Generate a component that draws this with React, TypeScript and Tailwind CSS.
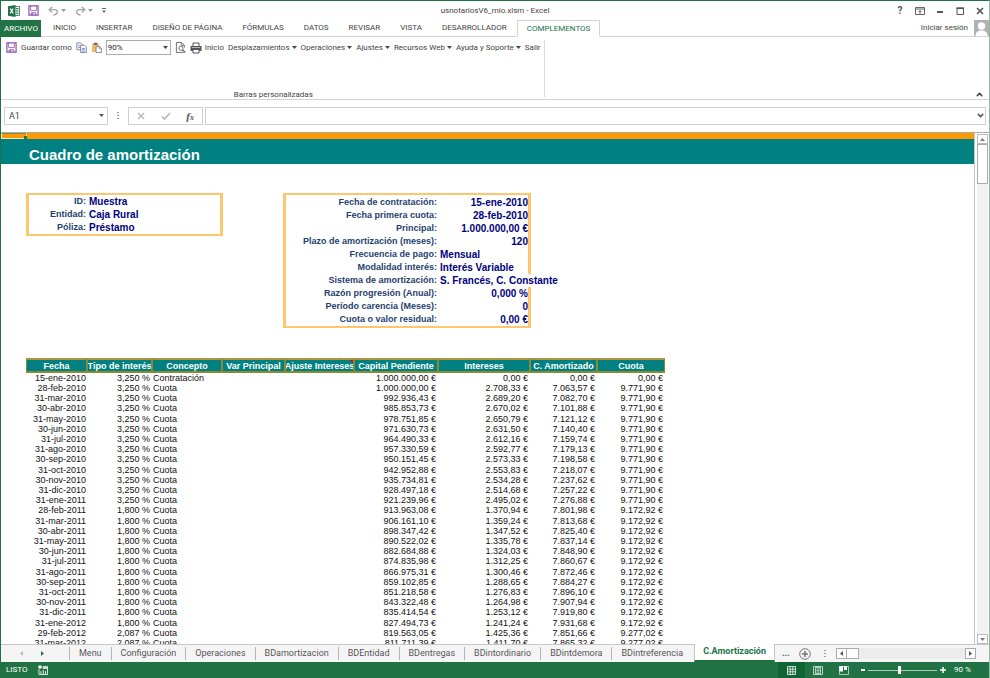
import type { ReactNode } from "react";
import { ChevronDown, ChevronUp } from "lucide-react";

const ribbonTabs = [
  "INICIO",
  "INSERTAR",
  "DISEÑO DE PÁGINA",
  "FÓRMULAS",
  "DATOS",
  "REVISAR",
  "VISTA",
  "DESARROLLADOR",
  "COMPLEMENTOS",
];

const addinMenus = [
  "Desplazamientos",
  "Operaciones",
  "Ajustes",
  "Recursos Web",
  "Ayuda y Soporte",
];

const sheetTabs = [
  "Menu",
  "Configuración",
  "Operaciones",
  "BDamortizacion",
  "BDEntidad",
  "BDentregas",
  "BDintordinario",
  "BDintdemora",
  "BDintreferencia",
];

const loanInfo = [
  { label: "ID:", value: "Muestra" },
  { label: "Entidad:", value: "Caja Rural" },
  { label: "Póliza:", value: "Préstamo" },
];

const loanTerms = [
  { label: "Fecha de contratación:", value: "15-ene-2010", right: true },
  { label: "Fecha primera cuota:", value: "28-feb-2010", right: true },
  { label: "Principal:", value: "1.000.000,00 €", right: true },
  { label: "Plazo de amortización (meses):", value: "120", right: true },
  { label: "Frecuencia de pago:", value: "Mensual", right: false },
  { label: "Modalidad interés:", value: "Interés Variable", right: false },
  { label: "Sistema de amortización:", value: "S. Francés, C. Constante", right: false },
  { label: "Razón progresión (Anual):", value: "0,000 %", right: true },
  { label: "Período carencia (Meses):", value: "0", right: true },
  { label: "Cuota o valor residual:", value: "0,00 €", right: true },
];

const columns = [
  { title: "Fecha", width: "w-[61px]" },
  { title: "Tipo de interés", width: "w-[65px]" },
  { title: "Concepto", width: "w-[70px]" },
  { title: "Var Principal", width: "w-[63px]" },
  { title: "Ajuste Intereses", width: "w-[69px]", note: true },
  { title: "Capital Pendiente", width: "w-[84px]" },
  { title: "Intereses", width: "w-[92px]" },
  { title: "C. Amortizado", width: "w-[67px]" },
  { title: "Cuota", width: "w-[68px]" },
];

// fecha, tipo, concepto, capital pendiente, intereses, amortizado, cuota
const payments = [
  ["15-ene-2010", "3,250 %", "Contratación", "1.000.000,00", "0,00", "0,00", "0,00"],
  ["28-feb-2010", "3,250 %", "Cuota", "1.000.000,00", "2.708,33", "7.063,57", "9.771,90"],
  ["31-mar-2010", "3,250 %", "Cuota", "992.936,43", "2.689,20", "7.082,70", "9.771,90"],
  ["30-abr-2010", "3,250 %", "Cuota", "985.853,73", "2.670,02", "7.101,88", "9.771,90"],
  ["31-may-2010", "3,250 %", "Cuota", "978.751,85", "2.650,79", "7.121,12", "9.771,90"],
  ["30-jun-2010", "3,250 %", "Cuota", "971.630,73", "2.631,50", "7.140,40", "9.771,90"],
  ["31-jul-2010", "3,250 %", "Cuota", "964.490,33", "2.612,16", "7.159,74", "9.771,90"],
  ["31-ago-2010", "3,250 %", "Cuota", "957.330,59", "2.592,77", "7.179,13", "9.771,90"],
  ["30-sep-2010", "3,250 %", "Cuota", "950.151,45", "2.573,33", "7.198,58", "9.771,90"],
  ["31-oct-2010", "3,250 %", "Cuota", "942.952,88", "2.553,83", "7.218,07", "9.771,90"],
  ["30-nov-2010", "3,250 %", "Cuota", "935.734,81", "2.534,28", "7.237,62", "9.771,90"],
  ["31-dic-2010", "3,250 %", "Cuota", "928.497,18", "2.514,68", "7.257,22", "9.771,90"],
  ["31-ene-2011", "3,250 %", "Cuota", "921.239,96", "2.495,02", "7.276,88", "9.771,90"],
  ["28-feb-2011", "1,800 %", "Cuota", "913.963,08", "1.370,94", "7.801,98", "9.172,92"],
  ["31-mar-2011", "1,800 %", "Cuota", "906.161,10", "1.359,24", "7.813,68", "9.172,92"],
  ["30-abr-2011", "1,800 %", "Cuota", "898.347,42", "1.347,52", "7.825,40", "9.172,92"],
  ["31-may-2011", "1,800 %", "Cuota", "890.522,02", "1.335,78", "7.837,14", "9.172,92"],
  ["30-jun-2011", "1,800 %", "Cuota", "882.684,88", "1.324,03", "7.848,90", "9.172,92"],
  ["31-jul-2011", "1,800 %", "Cuota", "874.835,98", "1.312,25", "7.860,67", "9.172,92"],
  ["31-ago-2011", "1,800 %", "Cuota", "866.975,31", "1.300,46", "7.872,46", "9.172,92"],
  ["30-sep-2011", "1,800 %", "Cuota", "859.102,85", "1.288,65", "7.884,27", "9.172,92"],
  ["31-oct-2011", "1,800 %", "Cuota", "851.218,58", "1.276,83", "7.896,10", "9.172,92"],
  ["30-nov-2011", "1,800 %", "Cuota", "843.322,48", "1.264,98", "7.907,94", "9.172,92"],
  ["31-dic-2011", "1,800 %", "Cuota", "835.414,54", "1.253,12", "7.919,80", "9.172,92"],
  ["31-ene-2012", "1,800 %", "Cuota", "827.494,73", "1.241,24", "7.931,68", "9.172,92"],
  ["29-feb-2012", "2,087 %", "Cuota", "819.563,05", "1.425,36", "7.851,66", "9.277,02"],
  ["31-mar-2012", "2,087 %", "Cuota", "811.711,39", "1.411,70", "7.865,32", "9.277,02"],
];

function Caret({ className = "" }: { className?: string }) {
  return (
    <svg viewBox="0 0 5 3" className={`h-[3px] w-[5px] shrink-0 ${className}`} fill="currentColor">
      <path d="M0 0h5L2.500 3z" />
    </svg>
  );
}

function SaveIcon() {
  return (
    <svg viewBox="0 0 12 12" className="size-[11px]" fill="none" stroke="#8c4fae">
      <path d="M1 1h10v10H1z" strokeWidth="1.300" />
      <path d="M2.800 1v5h6.400V1" strokeWidth=".8" />
      <path d="M3.500 11V8.500h5V11" strokeWidth="1" />
      <path d="M5 9v2" strokeWidth="1.100" />
    </svg>
  );
}

function ExcelIcon() {
  return (
    <svg viewBox="0 0 12 12" className="size-3">
      <path d="M6.500 1.500h5v9h-5z" fill="#fff" stroke="#217346" strokeWidth=".8" />
      <path d="M8 3.500h2.500M8 5.200h2.500M8 6.900h2.500M8 8.600h2.500" stroke="#217346" strokeWidth=".9" />
      <path d="M0 1.200 7.500 0v12L0 10.800z" fill="#217346" />
      <path d="m2.200 3.700 3 4.600M5.200 3.700l-3 4.600" stroke="#fff" strokeWidth="1.200" />
    </svg>
  );
}

function UndoIcon({ flip = false }: { flip?: boolean }) {
  return (
    <svg
      viewBox="0 0 12 11"
      className={`h-[10px] w-[11px] ${flip ? "-scale-x-100" : ""}`}
      fill="none"
      stroke="#a6a6a6"
      strokeWidth="1.500"
    >
      <path d="M4.500 1 1.200 4l3.300 3M1.500 4H7c4.500 0 4.500 5-1 6.200" />
    </svg>
  );
}

function CopyIcon() {
  return (
    <svg viewBox="0 0 12 12" className="size-[11px]" fill="#fff" stroke="#6d7480" strokeWidth=".9">
      <path d="M1 1h4l2 2v5.500H1z" />
      <path d="M2.300 4h3M2.300 6h3" stroke="#5b8fc7" />
      <path d="M5 3.500h4l2.300 2.200v5.800H5z" />
      <path d="M6.300 7h3.600M6.300 8.500h3.600M6.300 10h3.600" stroke="#5b8fc7" />
    </svg>
  );
}

function PasteIcon() {
  return (
    <svg viewBox="0 0 12 12" className="size-[11px]">
      <path d="M1 2h8v9H1z" fill="#f1bd6b" />
      <path d="M3 .8h4v2.400H3z" fill="#666" />
      <path d="M5.500 5h3.800l2 2v4.500H5.500z" fill="#fff" stroke="#6d7480" strokeWidth=".9" />
      <path d="M9 5v2.300h2.300" fill="none" stroke="#6d7480" strokeWidth=".7" />
    </svg>
  );
}

function PreviewIcon() {
  return (
    <svg viewBox="0 0 12 12" className="size-[11px]" fill="none" stroke="#666">
      <path d="M9.500 11.400H1.500V.6h5.700l3 3V6" />
      <path d="M7 .6v3.200h3.300" strokeWidth=".8" />
      <circle cx="6.500" cy="6.800" r="2.300" fill="#fff" />
      <path d="m8.200 8.500 3 3" strokeWidth="1.400" />
    </svg>
  );
}

function PrinterIcon() {
  return (
    <svg viewBox="0 0 12 12" className="size-3">
      <path d="M3 4V1h6v3" fill="#fff" stroke="#555" />
      <path d="M.5 4h11v5H.5z" fill="#555" />
      <path d="M3 7.500h6V11H3z" fill="#fff" stroke="#555" />
      <path d="M1.800 5.500h8.400" stroke="#ddd" strokeWidth=".7" />
    </svg>
  );
}

function IconButton({ label, children }: { label: string; children: ReactNode }) {
  return (
    <button type="button" aria-label={label} className="flex shrink-0 items-center justify-center">
      {children}
    </button>
  );
}

function TitleBar() {
  return (
    <header className="grid h-[19px] grid-cols-[1fr_auto_1fr] items-center text-[#444]">
      <div className="flex items-center pl-[7px] text-[#999]">
        <ExcelIcon />
        <div className="ml-2 flex items-center gap-[9px]">
          <IconButton label="Guardar">
            <SaveIcon />
          </IconButton>
          <div className="flex items-center gap-[2px]">
            <IconButton label="Deshacer">
              <UndoIcon />
            </IconButton>
            <Caret className="h-[2px] w-[4px]" />
          </div>
          <div className="flex items-center gap-[2px]">
            <IconButton label="Rehacer">
              <UndoIcon flip />
            </IconButton>
            <Caret className="h-[2px] w-[4px]" />
          </div>
          <IconButton label="Personalizar barra">
            <svg viewBox="0 0 5 6" className="h-[5px] w-[4px]" fill="#666">
              <path d="M0 0h5v1H0zM0 3h5L2.500 6z" />
            </svg>
          </IconButton>
        </div>
      </div>
      <h1 className="text-[8px]">usnotariosV6_mio.xlsm - Excel</h1>
      <div className="flex items-center justify-end gap-[10px] pr-[4px] text-[#555]">
        <button type="button" className="w-[10px] text-[10px] font-bold leading-none">
          ?
        </button>
        <IconButton label="Opciones de la cinta">
          <svg viewBox="0 0 10 8" className="h-2 w-[10px]" fill="none" stroke="currentColor">
            <path d="M.5.5h9v7h-9zM.5 2h9" strokeWidth=".9" />
            <path d="M5 6.800V3.500M3.500 5 5 3.500 6.500 5" strokeWidth=".9" />
          </svg>
        </IconButton>
        <IconButton label="Minimizar">
          <svg viewBox="0 0 10 8" className="h-2 w-[10px]" fill="currentColor">
            <path d="M2 4h6v2H2z" />
          </svg>
        </IconButton>
        <IconButton label="Maximizar">
          <svg viewBox="0 0 10 8" className="h-2 w-[10px]" fill="none" stroke="currentColor">
            <path d="M2 1v6.500h6.500V1" />
            <path d="M1.500 1.200H9" strokeWidth="1.800" />
          </svg>
        </IconButton>
        <IconButton label="Cerrar">
          <svg viewBox="0 0 10 8" className="h-2 w-[10px]" stroke="currentColor" strokeWidth="1.600">
            <path d="m2 1 6 6M8 1 2 7" />
          </svg>
        </IconButton>
      </div>
    </header>
  );
}

function RibbonTabs() {
  return (
    <nav className="flex h-[17px] text-[8px] text-[#444]">
      <button type="button" className="w-10 bg-[#217346] text-white">
        ARCHIVO
      </button>
      <div className="w-[2px] border-b border-[#d4d4d4]" />
      {ribbonTabs.map((tab) => (
        <button
          key={tab}
          type="button"
          className={
            tab === "COMPLEMENTOS"
              ? "border border-[#d4d4d4] border-b-white px-[9px] text-[#217346]"
              : "border-b border-[#d4d4d4] px-[10px]"
          }
        >
          {tab}
        </button>
      ))}
      <div className="flex flex-1 items-center justify-end gap-[6px] border-b border-[#d4d4d4]">
        <a href="#" className="text-[#444]">
          Iniciar sesión
        </a>
        <svg viewBox="0 0 15 16" className="h-4 w-[15px]">
          <path d="M0 0h15v16H0z" fill="#b1b1b1" />
          <circle cx="7.500" cy="6" r="3.700" fill="#fff" />
          <path d="M1.500 16c0-4 2.500-5.500 6-5.500s6 1.500 6 5.500z" fill="#fff" />
        </svg>
      </div>
    </nav>
  );
}

function Ribbon() {
  return (
    <section className="flex h-[63px] border-b border-[#d4d4d4] text-[8px] text-[#444]">
      <div className="mb-[2px] mt-[3px] flex flex-col border-r border-[#dcdcdc] pl-[5px] pr-[3px]">
        <div className="flex h-[15px] items-center gap-[4px] whitespace-nowrap">
          <button type="button" className="flex items-center gap-[4px]">
            <SaveIcon />
            Guardar como
          </button>
          <IconButton label="Copiar">
            <CopyIcon />
          </IconButton>
          <IconButton label="Pegar">
            <PasteIcon />
          </IconButton>
          <div className="relative">
            <select
              aria-label="Zoom"
              className="block h-[15px] w-[65px] appearance-none border border-[#ababab] bg-white pl-px text-[8px] text-[#222]"
            >
              <option>90%</option>
            </select>
            <Caret className="pointer-events-none absolute right-[3px] top-[6px] h-[2px] w-[4px]" />
          </div>
          <IconButton label="Vista previa">
            <PreviewIcon />
          </IconButton>
          <button type="button" className="flex items-center gap-[3px]">
            <PrinterIcon />
            Inicio
          </button>
          {addinMenus.map((menu) => (
            <button key={menu} type="button" className="flex items-center gap-[2px]">
              {menu}
              <Caret className="h-[2px] w-[3px]" />
            </button>
          ))}
          <button type="button">Salir</button>
        </div>
        <p className="mt-auto text-center leading-[5px]">Barras personalizadas</p>
      </div>
      <button type="button" aria-label="Contraer la cinta" className="ml-auto mr-[5px] self-end">
        <ChevronUp className="size-[9px]" strokeWidth={4} />
      </button>
    </section>
  );
}

function FormulaBar() {
  return (
    <div className="flex h-8 items-center px-[3px] text-[#555]">
      <div className="relative">
        <input
          aria-label="Cuadro de nombres"
          defaultValue="A1"
          className="block h-[18px] w-[104px] border border-[#d0d0d0] pl-1 text-[9px] text-[#444] outline-none"
        />
        <Caret className="absolute right-1 top-[7px]" />
      </div>
      <svg viewBox="0 0 2 8" className="mx-[9px] h-2 w-[2px]" fill="#999">
        <path d="M0 0h2v1H0zM0 3h2v1H0zM0 6h2v1H0z" />
      </svg>
      <div className="flex h-[18px] w-[75px] items-center justify-between border border-[#d0d0d0] px-2">
        <IconButton label="Cancelar">
          <svg viewBox="0 0 8 8" className="size-2" stroke="#b5b5b5" strokeWidth="1.300">
            <path d="m1 1 6 6M7 1 1 7" />
          </svg>
        </IconButton>
        <IconButton label="Introducir">
          <svg viewBox="0 0 10 8" className="h-2 w-[10px]" fill="none" stroke="#b5b5b5" strokeWidth="1.600">
            <path d="m1 4.500 2.500 2.500L9 1" />
          </svg>
        </IconButton>
        <button
          type="button"
          className="font-['Liberation_Serif',serif] text-[11px] font-bold italic leading-none text-[#555]"
        >
          f<span className="text-[8px]">x</span>
        </button>
      </div>
      <div className="relative ml-[2px] flex-1">
        <input
          aria-label="Barra de fórmulas"
          className="block h-[18px] w-full border border-[#d0d0d0] px-1 text-[9px] outline-none"
        />
        <ChevronDown className="absolute right-px top-[4px] size-[9px]" strokeWidth={4} />
      </div>
    </div>
  );
}

function InfoBoxes() {
  return (
    <div className="flex items-start gap-[60px] text-[10px] font-bold leading-[13px] text-[#000080]">
      <dl className="w-[197px] border-x-[3px] border-y-2 border-[#ffc66d]">
        {loanInfo.map((item) => (
          <div key={item.label} className="flex gap-[3px]">
            <dt className="w-[57px] text-right text-[9px] text-[#1f3f70]">{item.label}</dt>
            <dd>{item.value}</dd>
          </div>
        ))}
      </dl>
      <dl className="w-[248px] border-x-[3px] border-y-2 border-[#ffc66d] pt-px">
        {loanTerms.map((item) => (
          <div key={item.label} className="flex gap-[3px] whitespace-nowrap">
            <dt className="w-[151px] shrink-0 text-right text-[9px] text-[#1f3f70]">{item.label}</dt>
            <dd className={item.right ? "flex-1 text-right" : "relative bg-white"}>{item.value}</dd>
          </div>
        ))}
      </dl>
    </div>
  );
}

function PaymentsTable() {
  return (
    <table className="w-[639px] table-fixed border-separate border-spacing-0 whitespace-nowrap text-[9px] leading-[10px] text-[#111]">
      <thead>
        <tr className="h-[15px]">
          {columns.map((column) => (
            <th
              key={column.title}
              scope="col"
              className={`relative overflow-hidden border-x border-y-2 border-[#8a8a35] border-t-[#b0933c] bg-[#008080] p-0 text-center font-bold text-white ${column.width}`}
            >
              <span className="flex justify-center">{column.title}</span>
              {column.note && (
                <svg viewBox="0 0 3 3" className="absolute right-0 top-0 size-[3px]" fill="#f00000">
                  <path d="M0 0h3v3z" />
                </svg>
              )}
            </th>
          ))}
        </tr>
      </thead>
      <tbody>
        {payments.map(([date, rate, concept, ...amounts]) => (
          <tr key={date} className="h-[10px] nth-[5n]:h-[11px]">
            <td className="p-0 pr-px text-right">{date}</td>
            <td className="p-0 pr-[2px] text-right">{rate}</td>
            <td className="p-0 pl-px">{concept}</td>
            <td className="p-0" />
            <td className="p-0" />
            {amounts.map((amount, i) => (
              <td key={i} className="p-0 pr-[2px] text-right">
                {amount} €
              </td>
            ))}
          </tr>
        ))}
      </tbody>
    </table>
  );
}

function Worksheet() {
  return (
    <main className="flex min-h-0 flex-1 border-t border-[#a9b0a9]">
      <div className="flex-1 overflow-hidden border-r border-[#c6c6c6] font-['Liberation_Sans',Arial,sans-serif]">
        <div className="h-[6px] bg-[#ff9900]">
          <div className="relative h-[6px] w-[26px] border border-[#f5e6bd] border-t-[#7d8a4a]">
            <span className="absolute -bottom-px -right-px size-[3px] bg-[#217346]" />
          </div>
        </div>
        <h2 className="h-[25px] bg-[#008080] pl-7 text-[15px] font-bold leading-[31px] text-white">
          Cuadro de amortización
        </h2>
        <div className="flex flex-col gap-[30px] pl-[25px] pt-[29px]">
          <InfoBoxes />
          <PaymentsTable />
        </div>
      </div>
      <div className="flex w-[14px] flex-col items-center bg-white pt-px text-[#777]">
        <button
          type="button"
          aria-label="Subir"
          className="flex h-[10px] w-[11px] items-center justify-center border border-[#bbb]"
        >
          <Caret className="rotate-180" />
        </button>
        <div className="w-[11px] flex-1 bg-[#f1f1f1]">
          <div className="h-10 border border-[#ababab] bg-white" />
        </div>
        <button
          type="button"
          aria-label="Bajar"
          className="flex h-[10px] w-[11px] items-center justify-center border border-[#bbb]"
        >
          <Caret />
        </button>
      </div>
    </main>
  );
}

function SheetTabs() {
  return (
    <nav className="flex h-[18px] items-center border-t border-[#c6c6c6] bg-[#f5f5f5] pr-[13px] text-[9px] text-[#555]">
      <div className="flex w-[68px] shrink-0 items-center gap-[16px] pl-[18px]">
        <IconButton label="Hoja anterior">
          <Caret className="rotate-90 text-[#bbb]" />
        </IconButton>
        <IconButton label="Hoja siguiente">
          <Caret className="-rotate-90 text-[#217346]" />
        </IconButton>
      </div>
      {sheetTabs.map((tab) => (
        <button key={tab} type="button" className="h-[13px] border-l border-[#b5b5b5] px-[9px] leading-[13px]">
          {tab}
        </button>
      ))}
      <button
        type="button"
        className="-mt-px ml-[2px] h-[18px] border-x border-b-2 border-x-[#c6c6c6] border-b-[#217346] bg-white px-2 font-bold text-[#217346]"
      >
        C.Amortización
      </button>
      <button type="button" className="ml-[7px] font-bold text-[#217346]">
        ...
      </button>
      <button type="button" aria-label="Hoja nueva" className="ml-[9px] shrink-0">
        <svg viewBox="0 0 12 12" className="size-3" fill="none" stroke="#777">
          <circle cx="6" cy="6" r="5.300" />
          <path d="M6 3v6M3 6h6" strokeWidth="1.600" />
        </svg>
      </button>
      <svg viewBox="0 0 2 8" className="ml-[13px] h-2 w-[2px] shrink-0" fill="#999">
        <path d="M0 0h2v1H0zM0 3h2v1H0zM0 6h2v1H0z" />
      </svg>
      <div className="ml-[10px] flex h-[11px] flex-1 bg-[#ececec]">
        <button
          type="button"
          aria-label="Izquierda"
          className="flex w-[11px] items-center justify-center border border-[#ababab] bg-white"
        >
          <Caret className="rotate-90" />
        </button>
        <div className="w-3 border border-l-0 border-[#ababab] bg-white" />
        <button
          type="button"
          aria-label="Derecha"
          className="ml-auto flex w-[11px] items-center justify-center border border-[#ababab] bg-white"
        >
          <Caret className="-rotate-90" />
        </button>
      </div>
    </nav>
  );
}

function StatusBar() {
  return (
    <footer className="flex h-4 items-center bg-[#217346] pl-[5px] text-[8px] text-white">
      <span>LISTO</span>
      <button type="button" aria-label="Grabar macro" className="ml-[11px]">
        <svg viewBox="0 0 10 10" className="size-[10px]" fill="none" stroke="#fff">
          <path d="M1 4v5.500h8.500V1.500H5" strokeWidth=".8" />
          <path d="M4.500 3h5" strokeWidth="1.500" />
          <path d="M3 9V6M5.300 9V5M7.500 9V6" strokeWidth=".8" />
          <circle cx="2" cy="2" r="1.800" fill="#fff" stroke="none" />
        </svg>
      </button>
      <div className="ml-auto flex h-full items-center">
        <button
          type="button"
          aria-label="Normal"
          className="flex h-full w-[27px] items-center justify-center bg-[#0e6434]"
        >
          <svg viewBox="0 0 9 9" className="size-[9px]" fill="none" stroke="#dcebe2" strokeWidth=".9">
            <path d="M.5.5h8v8h-8zM.5 3.200h8M.5 5.800h8M3.200.5v8M5.800.5v8" />
          </svg>
        </button>
        <button type="button" aria-label="Diseño de página" className="flex w-[26px] justify-center">
          <svg viewBox="0 0 10 9" className="h-[9px] w-[10px]" fill="none" stroke="#dcebe2" strokeWidth=".8">
            <path d="M.5.5h9v8h-9zM2.500 1.500h5v6h-5zM3.500 3h3M3.500 4.500h3M3.500 6h3" />
          </svg>
        </button>
        <button type="button" aria-label="Salto de página" className="flex w-[26px] justify-center">
          <svg viewBox="0 0 10 9" className="h-[9px] w-[10px]" fill="#fff">
            <path d="M0 0h4v5.500H0zM5 0h3v4H5z" />
            <path d="M.4.4h9.200v8.200H.4z" fill="none" stroke="#dcebe2" strokeWidth=".8" />
          </svg>
        </button>
        <button type="button" aria-label="Alejar" className="ml-1 h-[2px] w-1 bg-white" />
        <input
          type="range"
          aria-label="Nivel de zoom"
          min={0}
          max={200}
          defaultValue={90}
          className="mx-[3px] h-[9px] w-[69px] appearance-none bg-[linear-gradient(#a9cbb7,#a9cbb7)] bg-[length:100%_1px] bg-center bg-no-repeat [&::-webkit-slider-thumb]:h-[8px] [&::-webkit-slider-thumb]:w-[3px] [&::-webkit-slider-thumb]:appearance-none [&::-webkit-slider-thumb]:bg-white"
        />
        <button type="button" aria-label="Acercar">
          <svg viewBox="0 0 6 6" className="size-[6px]" stroke="#fff" strokeWidth="1.500">
            <path d="M3 0v6M0 3h6" />
          </svg>
        </button>
        <span className="w-[43px] pl-2">90 %</span>
      </div>
    </footer>
  );
}

export default function App() {
  return (
    <div className="flex h-screen flex-col overflow-hidden border-x border-t border-[#217346] border-r-[#8fbba2] bg-white font-['Roboto','Open_Sans',sans-serif]">
      <TitleBar />
      <RibbonTabs />
      <Ribbon />
      <FormulaBar />
      <Worksheet />
      <SheetTabs />
      <StatusBar />
    </div>
  );
}
